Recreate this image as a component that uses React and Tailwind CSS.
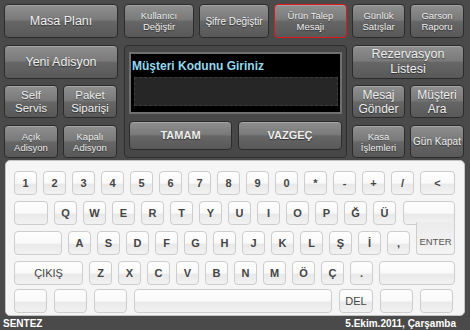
import React from 'react';

const dark =
  'flex flex-col items-center justify-center text-center rounded-[4px] border border-[#2b2b2b] bg-[linear-gradient(to_bottom,#8f8f8f_0%,#7a7a7a_46%,#666666_52%,#585858_100%)] text-[#eeeeee] shadow-[inset_0_1px_0_rgba(255,255,255,0.2)] [text-shadow:0_1px_1px_rgba(0,0,0,0.5)]';

const key =
  'flex items-center justify-center h-[24px] rounded-[4px] border border-[#cdcdcd] bg-[linear-gradient(to_bottom,#fefefe_0%,#f9f9f9_50%,#e9e9e9_56%,#f2f2f2_100%)] text-[11px] font-bold text-[#454545]';

const DarkBtn = ({ className = '', children }) => (
  <div className={`${dark} ${className}`}>{children}</div>
);

const Key = ({ w = 'w-[23px]', children }) => <div className={`${key} ${w}`}>{children}</div>;

const row1 = ['1', '2', '3', '4', '5', '6', '7', '8', '9', '0', '*', '-', '+', '/'];
const row2 = ['Q', 'W', 'E', 'R', 'T', 'Y', 'U', 'I', 'O', 'P', 'Ğ', 'Ü'];
const row3 = ['A', 'S', 'D', 'F', 'G', 'H', 'J', 'K', 'L', 'Ş', 'İ', ','];
const row4 = ['Z', 'X', 'C', 'V', 'B', 'N', 'M', 'Ö', 'Ç', '.'];

export default function App() {
  return (
    <div className="w-[470px] h-[330px] overflow-hidden bg-[#4a4a4a] font-['Liberation_Sans',Arial,sans-serif]">
      {/* Top buttons */}
      <div className="flex gap-[6px] pl-[4px] pt-[4px]">
        <div className="flex w-[114px] flex-col">
          <DarkBtn className="h-[34px] text-[12.5px]">Masa Planı</DarkBtn>
          <DarkBtn className="mt-[7px] h-[34px] text-[12.5px]">Yeni Adisyon</DarkBtn>
          <div className="mt-[6px] flex h-[33px] gap-[5px]">
            <DarkBtn className="w-[54px] text-[11.5px] leading-[13px]">Self<br />Servis</DarkBtn>
            <DarkBtn className="w-[54px] text-[11.5px] leading-[13px]">Paket<br />Siparişi</DarkBtn>
          </div>
          <div className="mt-[7px] flex h-[33px] gap-[5px]">
            <DarkBtn className="w-[54px] text-[9.5px] leading-[11px]">Açık<br />Adisyon</DarkBtn>
            <DarkBtn className="w-[54px] text-[9.5px] leading-[11px]">Kapalı<br />Adisyon</DarkBtn>
          </div>
        </div>

        <div className="flex w-[341px] flex-col">
          <div className="flex h-[34px] gap-[5px]">
            <DarkBtn className="w-[70px] text-[9.5px] leading-[11px]">Kullanıcı<br />Değiştir</DarkBtn>
            <DarkBtn className="w-[70px] text-[10px]">Şifre Değiştir</DarkBtn>
            <DarkBtn className="w-[73px] text-[9.5px] leading-[11px] !border-[#e01818]">Ürün Talep<br />Mesajı</DarkBtn>
            <DarkBtn className="w-[53px] text-[9.5px] leading-[11px]">Günlük<br />Satışlar</DarkBtn>
            <DarkBtn className="w-[54px] text-[9.5px] leading-[11px]">Garson<br />Raporu</DarkBtn>
          </div>

          <div className="mt-[7px] flex gap-[5px]">
            {/* Input panel */}
            <div className="h-[113px] w-[223px] rounded-[4px] border border-[#2e2e2e] bg-[#474747] px-[4px] pt-[6px]">
              <div className="h-[62px] w-[213px] border-2 border-[#707070] bg-black">
                <div className="pl-[1px] pt-[5px] text-[12px] font-bold leading-[14px] text-[#93d8ef]">
                  Müşteri Kodunu Giriniz
                </div>
                <div className="ml-[3px] mt-[4px] h-[29px] w-[204px] border border-dashed border-[#3c3c3c] bg-[#262626]" />
              </div>
              <div className="mt-[7px] flex h-[29px] gap-[6px]">
                <DarkBtn className="w-[103px] text-[11px] font-bold text-[#e2e2e2]">TAMAM</DarkBtn>
                <DarkBtn className="w-[104px] text-[11px] font-bold text-[#e2e2e2]">VAZGEÇ</DarkBtn>
              </div>
            </div>

            <div className="flex w-[112px] flex-col">
              <DarkBtn className="h-[34px] text-[12.5px] leading-[15px]">Rezervasyon<br />Listesi</DarkBtn>
              <div className="mt-[6px] flex h-[33px] gap-[5px]">
                <DarkBtn className="w-[53px] text-[12px] leading-[14px]">Mesaj<br />Gönder</DarkBtn>
                <DarkBtn className="w-[54px] text-[12px] leading-[14px]">Müşteri<br />Ara</DarkBtn>
              </div>
              <div className="mt-[7px] flex h-[33px] gap-[5px]">
                <DarkBtn className="w-[53px] text-[9.5px] leading-[11px]">Kasa<br />İşlemleri</DarkBtn>
                <DarkBtn className="w-[54px] text-[10px]">Gün Kapat</DarkBtn>
              </div>
            </div>
          </div>
        </div>
      </div>

      {/* Keyboard */}
      <div className="ml-[5px] mt-[2px] h-[156px] w-[460px] rounded-[5px] border border-[#c4c4c4] bg-[#f5f5f5] pl-[8px] pt-[10px]">
        <div className="flex gap-[6px]">
          {row1.map((k) => (
            <Key key={k}>{k}</Key>
          ))}
          <Key w="w-[35px]">&lt;</Key>
        </div>

        <div className="mt-[6px] flex gap-[6px]">
          <div className="flex flex-col gap-[6px]">
            <div className="flex gap-[6px]">
              <Key w="w-[34px]" />
              {row2.map((k) => (
                <Key key={k}>{k}</Key>
              ))}
            </div>
            <div className="flex gap-[6px]">
              <Key w="w-[48px]" />
              {row3.map((k) => (
                <Key key={k}>{k}</Key>
              ))}
            </div>
          </div>
          {/* L-shaped enter */}
          <div className="flex w-[39px] flex-col">
            <div className={`${key} -ml-[13px] w-[52px]`} />
            <div className="relative z-10 -mt-[3px] flex h-[33px] w-[39px] items-center justify-center rounded-b-[4px] border-x border-b border-[#cdcdcd] bg-[linear-gradient(to_bottom,#ececec_0%,#f3f3f3_100%)] pt-[8px] text-[9.5px] text-[#555]">
              ENTER
            </div>
          </div>
        </div>

        <div className="mt-[6px] flex gap-[6px]">
          <Key w="w-[69px]"><span className="font-normal text-[11px]">ÇIKIŞ</span></Key>
          {row4.map((k) => (
            <Key key={k}>{k}</Key>
          ))}
          <Key w="w-[76px]" />
        </div>

        <div className="mt-[4px] flex gap-[7px]">
          <Key w="w-[33px]" />
          <Key w="w-[33px]" />
          <Key w="w-[33px]" />
          <Key w="w-[198px]" />
          <Key w="w-[34px]"><span className="font-normal text-[11px]">DEL</span></Key>
          <Key w="w-[33px]" />
          <Key w="w-[33px]" />
        </div>
      </div>

      {/* Footer */}
      <div className="flex h-[14px] items-center justify-between pl-[3px] pr-[14px] text-[10px] font-bold text-white">
        <span>SENTEZ</span>
        <span>5.Ekim.2011, Çarşamba</span>
      </div>
    </div>
  );
}
